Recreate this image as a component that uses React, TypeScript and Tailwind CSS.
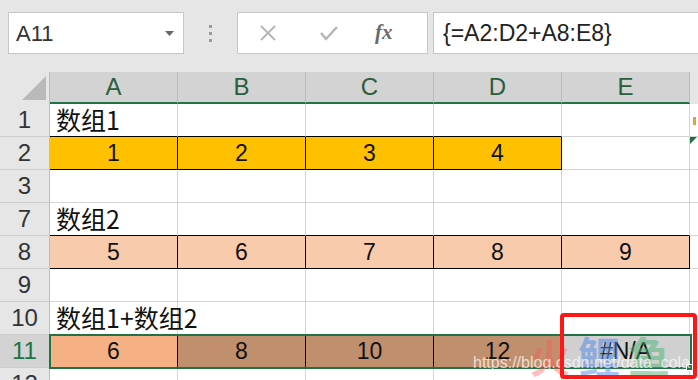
type Cell = { text?: string; bg?: string; box?: boolean; left?: boolean };
type Row = { n: string; cells: Cell[]; selected?: boolean };

const cjk = { fontFamily: '"Noto Sans CJK SC", "Liberation Sans", sans-serif' };
const latin = { fontFamily: '"Liberation Sans", "Noto Sans CJK SC", sans-serif' };
const COLS = ['A', 'B', 'C', 'D', 'E'];

const rows: Row[] = [
  { n: '1', cells: [{ text: '数组1', left: true }, {}, {}, {}, {}] },
  {
    n: '2',
    cells: [
      { text: '1', bg: 'bg-[#ffc000]', box: true },
      { text: '2', bg: 'bg-[#ffc000]', box: true },
      { text: '3', bg: 'bg-[#ffc000]', box: true },
      { text: '4', bg: 'bg-[#ffc000]', box: true },
      {},
    ],
  },
  { n: '3', cells: [{}, {}, {}, {}, {}] },
  { n: '7', cells: [{ text: '数组2', left: true }, {}, {}, {}, {}] },
  {
    n: '8',
    cells: ['5', '6', '7', '8', '9'].map(t => ({ text: t, bg: 'bg-[#f8cbad]', box: true })),
  },
  { n: '9', cells: [{}, {}, {}, {}, {}] },
  { n: '10', cells: [{ text: '数组1+数组2', left: true }, {}, {}, {}, {}] },
  {
    n: '11',
    selected: true,
    cells: [
      { text: '6', bg: 'bg-[#f5b084]', box: true },
      { text: '8', bg: 'bg-[#c08f6d]', box: true },
      { text: '10', bg: 'bg-[#c08f6d]', box: true },
      { text: '12', bg: 'bg-[#c08f6d]', box: true },
      { text: '#N/A', bg: 'bg-[#d0d0d0]' },
    ],
  },
  { n: '12', cells: [{}, {}, {}, {}, {}] },
];

function GridCell({ cell, below, right }: { cell: Cell; below?: Cell; right?: Cell }) {
  const bBlack = cell.box || below?.box;
  const rBlack = cell.box || right?.box;
  return (
    <div
      className={`w-[128px] h-[33px] shrink-0 border-b border-r flex items-center text-[#111] overflow-visible whitespace-nowrap ${
        cell.bg ?? 'bg-white'
      } ${bBlack ? 'border-b-black' : 'border-b-[#d4d4d4]'} ${rBlack ? 'border-r-black' : 'border-r-[#d4d4d4]'} ${
        cell.left ? 'justify-start pl-[6px] text-[25px]' : 'justify-center text-[23px]'
      }`}
      style={cell.left ? cjk : latin}
    >
      {cell.text && <span className="relative z-10">{cell.text}</span>}
    </div>
  );
}

export default function App() {
  return (
    <div className="relative w-[698px] h-[380px] overflow-hidden bg-[#e6e6e6]" style={cjk}>
      {/* formula bar */}
      <div className="h-[72px] flex items-start pt-[12px] pl-[8px]">
        <div className="w-[176px] h-[42px] bg-white border border-[#c6c6c6] flex items-center justify-between pl-[7px] pr-[9px]">
          <span className="text-[22px] text-[#333]" style={latin}>A11</span>
          <svg width="9" height="5" viewBox="0 0 9 5"><path d="M0 0h9L4.5 5z" fill="#666" /></svg>
        </div>
        <div className="w-[53px] h-[42px] flex flex-col items-center justify-center gap-[4px]">
          <div className="w-[3px] h-[3px] bg-[#9a9a9a]" />
          <div className="w-[3px] h-[3px] bg-[#9a9a9a]" />
          <div className="w-[3px] h-[3px] bg-[#9a9a9a]" />
        </div>
        <div className="w-[191px] h-[42px] bg-white border border-[#c6c6c6] flex items-center">
          <svg className="ml-[21px]" width="18" height="18" viewBox="0 0 18 18">
            <path d="M2 2l14 14M16 2L2 16" stroke="#b4b4b4" strokeWidth="1.8" />
          </svg>
          <svg className="ml-[42px]" width="20" height="18" viewBox="0 0 20 18">
            <path d="M2 9l5 6L18 3" stroke="#b4b4b4" strokeWidth="2.4" fill="none" />
          </svg>
          <span
            className="ml-[36px] text-[21px] italic font-bold text-[#6a6a6a]"
            style={{ fontFamily: '"Liberation Serif", serif' }}
          >
            fx
          </span>
        </div>
        <div className="ml-[5px] flex-1 h-[42px] bg-white border border-[#c6c6c6] border-r-0 flex items-center pl-[9px]">
          <span className="text-[23px] text-[#222]" style={latin}>
            {'{=A2:D2+A8:E8}'}
          </span>
        </div>
      </div>

      {/* column headers */}
      <div className="flex h-[32px]">
        <div className="w-[50px] h-[32px] shrink-0 bg-[#e6e6e6] border-r border-[#bdbdbd] relative">
          <svg className="absolute left-[22px] top-[4px]" width="24" height="24" viewBox="0 0 24 24">
            <path d="M24 0V24H0z" fill="#b9b9b9" />
          </svg>
        </div>
        {COLS.map(c => (
          <div
            key={c}
            className="w-[128px] h-[32px] shrink-0 bg-[#d3d3d3] border-r border-r-[#bababa] border-b-2 border-b-[#217346] flex items-center justify-center text-[24px] text-[#2a5e3d]"
            style={latin}
          >
            {c}
          </div>
        ))}
        <div className="flex-1 h-[32px] bg-[#e6e6e6]" />
      </div>

      {/* rows */}
      {rows.map((row, ri) => (
        <div key={row.n} className="flex">
          <div
            className={`w-[50px] h-[33px] shrink-0 border-r border-b border-r-[#bdbdbd] border-b-[#cdcdcd] flex items-center justify-center text-[24px] ${
              row.selected ? 'bg-[#d3d3d3] text-[#217346]' : 'bg-[#e6e6e6] text-[#333]'
            }`}
            style={latin}
          >
            {row.n}
          </div>
          {row.cells.map((cell, ci) => (
            <GridCell key={ci} cell={cell} below={rows[ri + 1]?.cells[ci]} right={row.cells[ci + 1]} />
          ))}
          <div className="flex-1 h-[33px] bg-white border-b border-[#d4d4d4] relative">
            {row.n === '1' && (
              <div className="absolute left-[3px] top-[13px] w-[3px] h-[8px] bg-[#e0a040]" />
            )}
            {row.n === '2' && (
              <svg className="absolute left-0 top-0" width="7" height="7" viewBox="0 0 7 7">
                <path d="M0 0h7L0 7z" fill="#1e7145" />
              </svg>
            )}
          </div>
        </div>
      ))}

      {/* selection of A11:E11 */}
      <div className="absolute left-[49px] top-[334px] w-[643px] h-[35px] border-2 border-[#217346] pointer-events-none z-20" />
      <div className="absolute left-[686px] top-[364px] w-[7px] h-[7px] bg-[#217346] border border-white z-20" />

      {/* watermark */}
      <div className="absolute z-20 left-[530px] top-[336px] text-[40px] font-bold text-[#ff5a5a] opacity-40 leading-none">火</div>
      <div className="absolute z-20 left-[578px] top-[334px] text-[42px] font-bold text-[#4f86e6] opacity-50 leading-none">鲤</div>
      <div className="absolute z-20 left-[628px] top-[334px] text-[42px] font-bold text-[#4fb374] opacity-50 leading-none">鱼</div>
      <div
        className="absolute z-20 left-[473px] top-[355px] text-[16px] leading-none text-white opacity-70 whitespace-nowrap"
        style={latin}
      >
        https://blog.csdn.net/data_cola
      </div>

      {/* red highlight box */}
      <div className="absolute z-20 left-[560px] top-[313px] w-[137px] h-[66px] border-[4px] border-[#ff1717] rounded-[4px]" />
    </div>
  );
}
